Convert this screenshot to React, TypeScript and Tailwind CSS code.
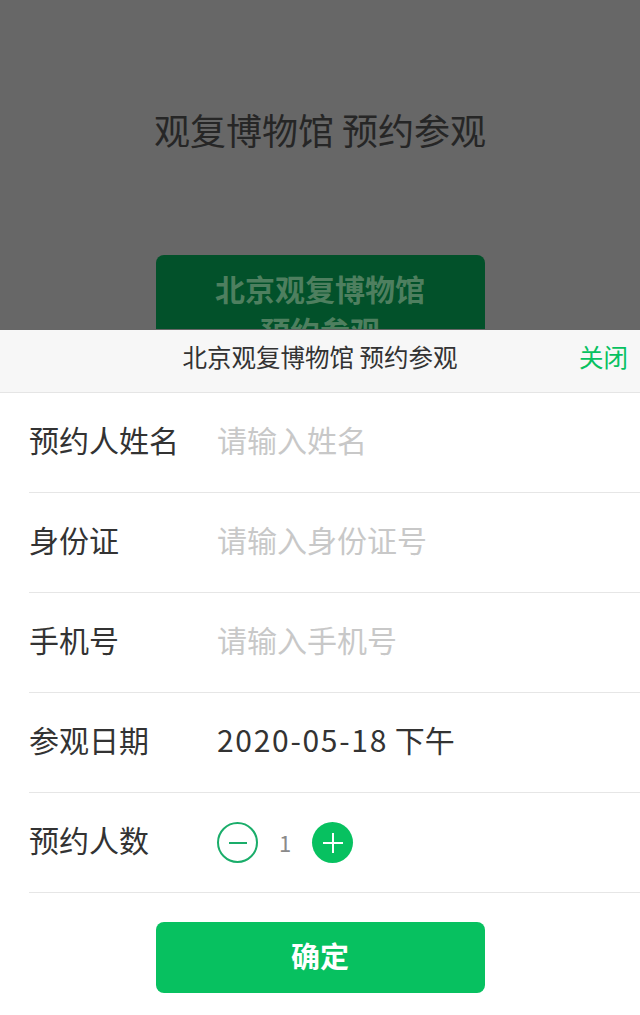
import React from "react";

const font = { fontFamily: '"Noto Sans CJK SC", "Noto Sans", sans-serif' };

function Row({ label, children }: { label: string; children: React.ReactNode }) {
  return (
    <div className="flex h-[100px] items-center border-b border-[#e6e6e6] pb-[7px]">
      <div className="w-[188px] shrink-0 text-[30px] text-[#333333]">{label}</div>
      <div className="flex flex-1 items-center">{children}</div>
    </div>
  );
}

export default function App() {
  return (
    <div className="relative h-[1015px] w-[640px] overflow-hidden bg-[#676767]" style={font}>
      {/* dimmed background page (covered by the sheet below y=329) */}
      <div className="h-[329px] overflow-hidden">
        <div className="flex flex-col items-center pt-[104px]">
          <div className="text-[36px] leading-[50px] text-[#262626]">观复博物馆 预约参观</div>
          <div className="mt-[101px] flex h-[140px] w-[329px] flex-col items-center rounded-[8px] bg-[#02512a] pt-[12px]">
            <div className="text-[30px] font-bold leading-[42px] text-[#4e7f5f]">北京观复博物馆</div>
            <div className="text-[30px] font-bold leading-[42px] text-[#4e7f5f]">预约参观</div>
          </div>
        </div>
      </div>

      {/* bottom sheet */}
      <div className="absolute inset-x-0 bottom-0 flex flex-col bg-white">
        <div className="relative flex h-[63px] items-center justify-center border-b border-[#e5e5e5] bg-[#f7f7f7] pb-[7px]">
          <div className="text-[24.5px] text-[#333333]">北京观复博物馆 预约参观</div>
          <div className="absolute bottom-[7px] right-[12px] top-0 flex items-center text-[24.5px] text-[#07c160]">关闭</div>
        </div>
        <div className="ml-[29px] flex flex-col">
          <Row label="预约人姓名">
            <span className="text-[30px] text-[#c8c8c8]">请输入姓名</span>
          </Row>
          <Row label="身份证">
            <span className="text-[30px] text-[#c8c8c8]">请输入身份证号</span>
          </Row>
          <Row label="手机号">
            <span className="text-[30px] text-[#c8c8c8]">请输入手机号</span>
          </Row>
          <Row label="参观日期">
            <span className="text-[30px] text-[#333333]">
              <span className="tracking-[1.7px]">2020-05-18</span> 下午
            </span>
          </Row>
          <Row label="预约人数">
            <div className="flex items-center pt-[7px]">
              <div className="flex h-[41px] w-[41px] items-center justify-center rounded-full border-2 border-[#1aad6a]">
                <svg width="22" height="22" viewBox="0 0 22 22">
                  <line x1="2" y1="11" x2="20" y2="11" stroke="#1aad6a" strokeWidth="2" />
                </svg>
              </div>
              <div className="w-[54px] text-center text-[22px] text-[#8a8a8a]">1</div>
              <div className="flex h-[41px] w-[41px] items-center justify-center rounded-full bg-[#07c160]">
                <svg width="22" height="22" viewBox="0 0 22 22">
                  <line x1="1" y1="11" x2="21" y2="11" stroke="#ffffff" strokeWidth="2" />
                  <line x1="11" y1="1" x2="11" y2="21" stroke="#ffffff" strokeWidth="2" />
                </svg>
              </div>
            </div>
          </Row>
        </div>
        <div className="flex justify-center pb-[22px] pt-[29px]">
          <div className="flex h-[71px] w-[329px] items-center justify-center rounded-[8px] bg-[#07c160] pb-[4px] text-[29px] font-bold text-white">
            确定
          </div>
        </div>
      </div>
    </div>
  );
}
